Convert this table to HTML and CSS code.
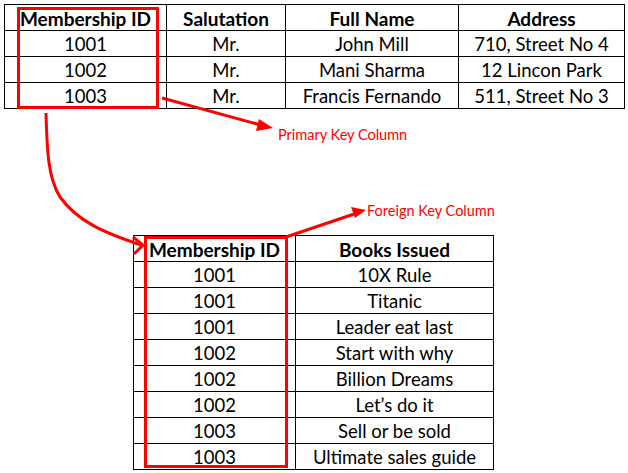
FILE: index.html
```html
<!DOCTYPE html>
<html>
<head>
<meta charset="utf-8">
<link rel="stylesheet" href="styles.css">
</head>
<body>
<div class="canvas">
  <table class="grid grid-top">
    <colgroup><col class="c1"><col class="c2"><col class="c3"><col class="c4"></colgroup>
    <thead>
      <tr><th>Membership ID</th><th>Salutation</th><th>Full Name</th><th>Address</th></tr>
    </thead>
    <tbody>
      <tr><td>1001</td><td>Mr.</td><td>John Mill</td><td>710, Street No 4</td></tr>
      <tr><td>1002</td><td>Mr.</td><td>Mani Sharma</td><td>12 Lincon Park</td></tr>
      <tr><td>1003</td><td>Mr.</td><td>Francis Fernando</td><td>511, Street No 3</td></tr>
    </tbody>
  </table>

  <table class="grid grid-bottom">
    <colgroup><col class="b1"><col class="b2"></colgroup>
    <thead>
      <tr><th>Membership ID</th><th>Books Issued</th></tr>
    </thead>
    <tbody>
      <tr><td>1001</td><td>10X Rule</td></tr>
      <tr><td>1001</td><td>Titanic</td></tr>
      <tr><td>1001</td><td>Leader eat last</td></tr>
      <tr><td>1002</td><td>Start with why</td></tr>
      <tr><td>1002</td><td>Billion Dreams</td></tr>
      <tr><td>1002</td><td>Let’s do it</td></tr>
      <tr><td>1003</td><td>Sell or be sold</td></tr>
      <tr><td>1003</td><td>Ultimate sales guide</td></tr>
    </tbody>
  </table>

  <svg class="overlay" width="628" height="473" viewBox="0 0 628 473">
    <g fill="none" stroke="#ff0000" stroke-width="3">
      <rect x="18.5" y="8.5" width="139" height="99"/>
      <rect x="145.5" y="237.5" width="141" height="229"/>
      <path d="M162,98 L268,127"/>
      <path d="M286,237 L360,212"/>
      <path d="M46,113 C47,150 48,178 60,197 C78,222 105,233 141,245"/>
      <path d="M133,237 L143,245 L134,254" stroke-linejoin="miter"/>
    </g>
    <g fill="#ff0000">
      <path d="M273,128 L259,119 L256,131 Z"/>
      <path d="M366,210 L351,207 L355,218 Z"/>
    </g>
  </svg>
  <div class="label label-pk">Primary Key Column</div>
  <div class="label label-fk">Foreign Key Column</div>
</div>
</body>
</html>
```

FILE: styles.css
```css
html, body {
  margin: 0;
  padding: 0;
  background: #ffffff;
}
.canvas {
  position: relative;
  width: 628px;
  height: 473px;
  padding: 4px 0 0 4px;
  box-sizing: border-box;
  font-family: Lato, "Open Sans", sans-serif;
  color: #000;
}
.grid {
  border-collapse: collapse;
  table-layout: fixed;
}
.grid th, .grid td {
  border: 1px solid #000;
  padding: 2px 0 0 0;
  height: 23px;
  text-align: center;
  font-size: 18.5px;
  line-height: 23px;
  white-space: nowrap;
  overflow: hidden;
}
.grid th {
  font-weight: 700;
  font-size: 19px;
}
.grid-top { width: 621px; }
.c1 { width: 162px; }
.c2 { width: 119px; }
.c3 { width: 173px; }
.c4 { width: 166px; }
.grid-bottom {
  width: 361px;
  margin: 126px 0 0 129px;
}
.b1 { width: 162px; }
.b2 { width: 198px; }
.overlay {
  position: absolute;
  left: 0;
  top: 0;
  pointer-events: none;
}
.label {
  position: absolute;
  color: #ff0000;
  font-size: 14.5px;
  line-height: 18px;
  white-space: nowrap;
}
.label-pk { left: 278px; top: 126px; }
.label-fk { left: 367px; top: 202px; }
```
